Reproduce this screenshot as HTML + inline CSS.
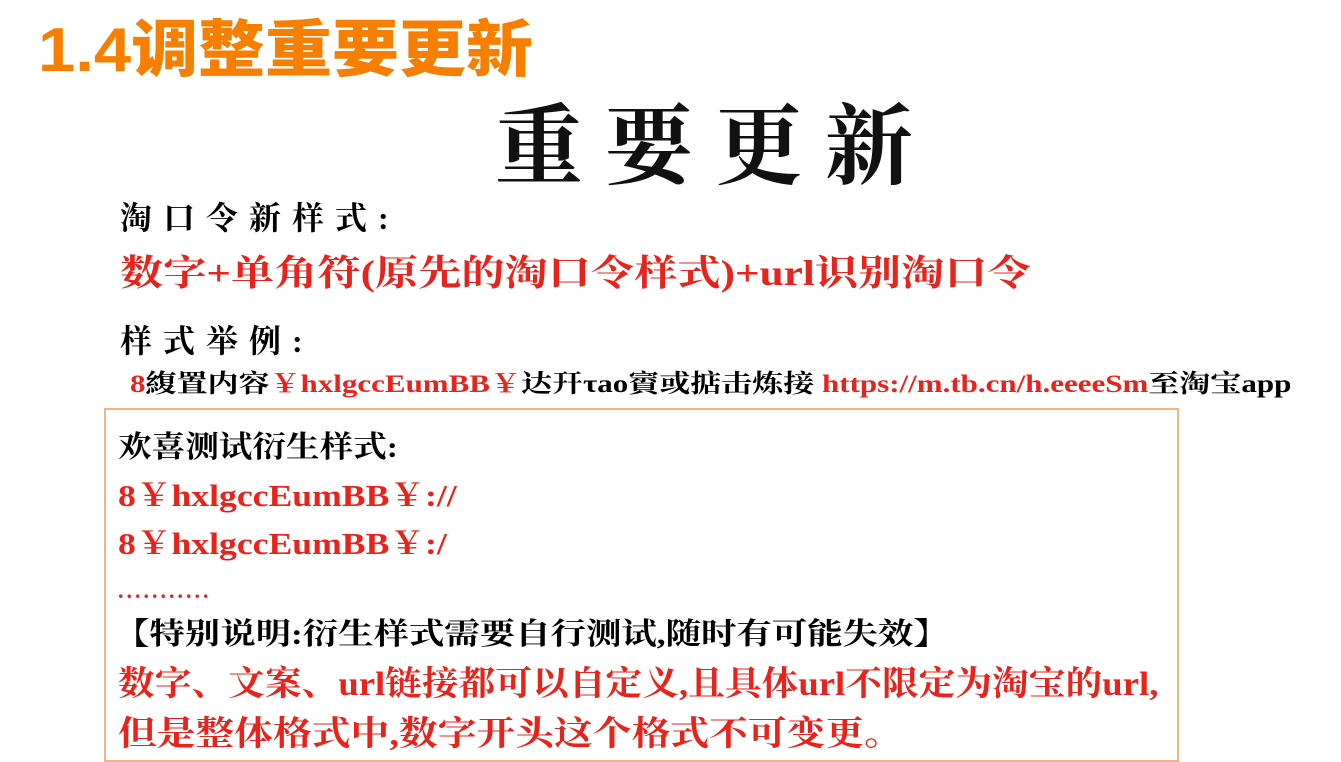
<!DOCTYPE html><html><head><meta charset="utf-8"><style>
body{margin:0;width:1341px;height:762px;background:#fff;position:relative;overflow:hidden;font-family:"Liberation Serif","Noto Serif CJK SC",serif;font-weight:bold}
div{position:absolute;white-space:nowrap;line-height:1;transform-origin:left top}
.r{color:#e8231b}
</style></head><body>
<div style="left:38px;top:20px;font-family:'Liberation Sans','Noto Sans CJK SC',sans-serif;font-size:62px;color:#f77f00;font-weight:900;transform:scaleX(1.08)">1.4调整重要更新</div>
<div style="left:495px;top:105px;font-size:88px;letter-spacing:22px;color:#111">重要更新</div>
<div style="left:120px;top:202px;font-size:32px;letter-spacing:11px">淘口令新样式:</div>
<div class="r" style="left:120px;top:255px;font-size:36px;transform:scaleX(1.2)">数字+单角符(原先的淘口令样式)+url识别淘口令</div>
<div style="left:120px;top:325px;font-size:32px;letter-spacing:11px">样式举例:</div>
<div style="left:130px;top:372px;font-size:25px;transform:scaleX(1.24)"><span class="r">8</span>緮置内容<span class="r">￥hxlgccEumBB￥</span>达幵τao賨或掂击炼接 <span class="r">https://m.tb.cn/h.eeeeSm</span>至淘宝app</div>
<div style="left:104px;top:408px;width:1071px;height:350px;border:2px solid #f0b48a"></div>
<div style="left:118px;top:433px;font-size:30px;transform:scaleX(1.12)">欢喜测试衍生样式:</div>
<div class="r" style="left:118px;top:480px;font-size:31px;transform:scaleX(1.15)">8￥hxlgccEumBB￥://</div>
<div class="r" style="left:118px;top:528px;font-size:31px;transform:scaleX(1.15)">8￥hxlgccEumBB￥:/</div>
<div class="r" style="left:118px;top:580px;font-size:22px;letter-spacing:3px">...........</div>
<div style="left:114px;top:620px;font-size:30px;transform:scaleX(1.18)">【特别说明:衍生样式需要自行测试,随时有可能失效】</div>
<div class="r" style="left:118px;top:668px;font-size:34px;transform:scaleX(1.08)">数字、文案、url链接都可以自定义,且具体url不限定为淘宝的url,</div>
<div class="r" style="left:118px;top:718px;font-size:34px;transform:scaleX(1.14)">但是整体格式中,数字开头这个格式不可变更。</div>
</body></html>
